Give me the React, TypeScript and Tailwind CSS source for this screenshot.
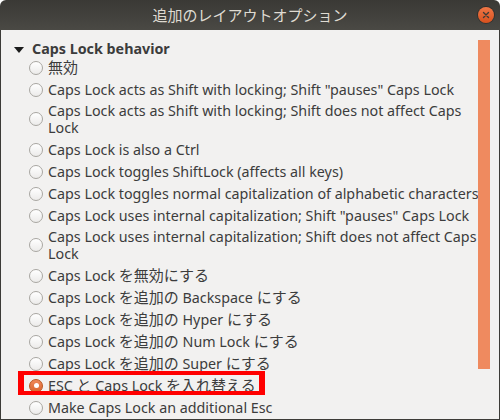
import React from "react";

const FONT = { fontFamily: '"Noto Sans", "Noto Sans CJK JP", sans-serif' };

type Item = { lines: string[]; checked?: boolean; marked?: boolean };

const items: Item[] = [
  { lines: ["無効"] },
  { lines: ['Caps Lock acts as Shift with locking; Shift "pauses" Caps Lock'] },
  { lines: ["Caps Lock acts as Shift with locking; Shift does not affect Caps", "Lock"] },
  { lines: ["Caps Lock is also a Ctrl"] },
  { lines: ["Caps Lock toggles ShiftLock (affects all keys)"] },
  { lines: ["Caps Lock toggles normal capitalization of alphabetic characters"] },
  { lines: ['Caps Lock uses internal capitalization; Shift "pauses" Caps Lock'] },
  { lines: ["Caps Lock uses internal capitalization; Shift does not affect Caps", "Lock"] },
  { lines: ["Caps Lock を無効にする"] },
  { lines: ["Caps Lock を追加の Backspace にする"] },
  { lines: ["Caps Lock を追加の Hyper にする"] },
  { lines: ["Caps Lock を追加の Num Lock にする"] },
  { lines: ["Caps Lock を追加の Super にする"] },
  { lines: ["ESC と Caps Lock を入れ替える"], checked: true, marked: true },
  { lines: ["Make Caps Lock an additional Esc"] },
];

function Rich({ text }: { text: string }) {
  const parts = text.split(/([\u3000-\u9fff]+)/);
  return (
    <>
      {parts.map((p, i) =>
        /[\u3000-\u9fff]/.test(p) ? (
          <span key={i} className="text-[15px]">
            {p}
          </span>
        ) : (
          <React.Fragment key={i}>{p}</React.Fragment>
        )
      )}
    </>
  );
}

function Radio({ checked }: { checked?: boolean }) {
  if (checked) {
    return (
      <span className="flex h-[14px] w-[14px] shrink-0 items-center justify-center rounded-full border border-[#b9561f] bg-gradient-to-b from-[#f0895a] to-[#d9652d]">
        <span className="h-[5px] w-[5px] rounded-full bg-white" />
      </span>
    );
  }
  return (
    <span className="h-[14px] w-[14px] shrink-0 rounded-full border border-[#a9a7a2] bg-gradient-to-b from-[#ffffff] to-[#ecebea]" />
  );
}

export default function App() {
  return (
    <div className="h-[420px] w-[500px] bg-white" style={FONT}>
      <div className="flex h-[420px] w-[500px] flex-col overflow-hidden rounded-t-[6px]">
        {/* title bar */}
        <div className="relative flex h-[30px] shrink-0 items-center justify-center bg-gradient-to-b from-[#3a3935] to-[#4a4944]">
          <span className="text-[15px] text-[#dfdbd2]">追加のレイアウトオプション</span>
          <span className="absolute right-[6px] top-[7px] flex h-[16px] w-[16px] items-center justify-center rounded-full bg-gradient-to-b from-[#f07746] to-[#d8501c] shadow-[0_0_0_1px_rgba(0,0,0,0.25)]">
            <svg width="8" height="8" viewBox="0 0 8 8">
              <path d="M1.5 1.5 L6.5 6.5 M6.5 1.5 L1.5 6.5" stroke="#3c3b37" strokeWidth="1.4" strokeLinecap="round" />
            </svg>
          </span>
        </div>
        {/* content */}
        <div className="relative flex-1 overflow-hidden border-x border-b border-[#3c3b37] bg-[#f2f1f0]">
          <div className="flex flex-col pt-[11px] text-[14.3px] text-[#3c3c3c]">
            <div className="flex h-[15px] items-center pl-[13px]">
              <svg width="10" height="6" viewBox="0 0 10 6" className="mr-[8px] mt-[2px]">
                <path d="M0 0 H10 L5 6 Z" fill="#1c1c1c" />
              </svg>
              <span className="font-bold leading-[15px]">Caps Lock behavior</span>
            </div>
            {items.map((it, i) => (
              <div
                key={i}
                className={
                  it.lines.length > 1
                    ? "relative flex items-center pl-[28px] py-[2px]"
                    : "relative flex items-center pl-[28px] pt-[3px] pb-[2px]"
                }
              >
                <Radio checked={it.checked} />
                <span className="ml-[5px] whitespace-nowrap">
                  {it.lines.map((l, j) => (
                    <span key={j} className="block h-[17px] leading-[17px]">
                      <Rich text={l} />
                    </span>
                  ))}
                </span>
                {it.marked && (
                  <span className="pointer-events-none absolute left-[17px] top-[-3px] h-[24px] w-[247px] border-x-[6px] border-y-[4px] border-[#ff0000]" />
                )}
              </div>
            ))}
          </div>
          {/* overlay scrollbar */}
          <div className="absolute right-[9px] top-[10px] h-[329px] w-[12px] bg-[#ef8a5f]" />
        </div>
      </div>
    </div>
  );
}
